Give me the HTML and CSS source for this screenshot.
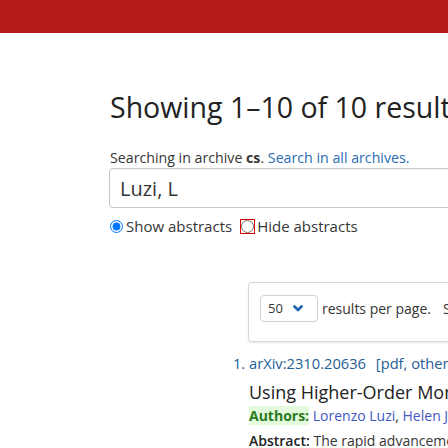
FILE: index.html
```html
<!DOCTYPE html>
<html>
<head>
<meta charset="utf-8">
<link rel="stylesheet" href="styles.css">
</head>
<body>
<header class="topbar"></header>
<main class="content">
  <h1 class="title">Showing 1–10 of 10 results for author: <span class="q">Luzi, L</span></h1>
  <p class="scope">Searching in archive <strong>cs</strong>. <a href="#">Search in all archives.</a></p>
  <div class="search">
    <input class="search-input" type="text" value="Luzi, L">
  </div>
  <div class="radios">
    <label class="radio"><input type="radio" name="abs" checked> Show abstracts</label>
    <label class="radio"><input type="radio" name="abs" class="focused"> Hide abstracts</label>
  </div>
  <div class="pager-box">
    <div class="select">
      <span class="select-val">50</span>
      <svg class="chev" width="10" height="7" viewBox="0 0 10 7"><path d="M1.5 1.5 L5 5 L8.5 1.5" fill="none" stroke="#1f67b0" stroke-width="2.8" stroke-linecap="round" stroke-linejoin="round"/></svg>
    </div>
    <span class="per-page">results per page.</span>
    <span class="per-page sort">Sort results by</span>
  </div>
  <ol class="results">
    <li class="result">
      <p class="result-id"><a href="#">arXiv:2310.20636</a> <span class="formats">[<a href="#">pdf</a>, <a href="#">other</a>]</span></p>
      <p class="result-title">Using Higher-Order Moments to Assess the Quality of GAN-generated Image Features</p>
      <p class="authors"><span class="label">Authors:</span> <a href="#">Lorenzo Luzi</a>, <a href="#">Helen Jenne</a>, <a href="#">Carlos Ortiz Marrero</a></p>
      <p class="abstract"><span class="abs-label">Abstract:</span> The rapid advancement of Generative Adversarial Networks</p>
    </li>
  </ol>
</main>
</body>
</html>
```
FILE: styles.css
```css
html, body {
  margin: 0;
  padding: 0;
  background: #fff;
  overflow: hidden;
}
body {
  width: 448px;
  height: 448px;
  font-family: "Open Sans", "Noto Sans", sans-serif;
  color: #363636;
}
.topbar {
  height: 33px;
  background: #b31b1b;
}
.content {
  padding-left: 110px;
  width: 900px;
}
.title {
  margin: 57px 0 0 0;
  font-size: 28.5px;
  line-height: 35px;
  font-weight: 400;
  color: #222;
  white-space: nowrap;
}
.scope {
  margin: 23px 0 0 0;
  font-size: 14.2px;
  line-height: 20px;
  white-space: nowrap;
  color: #363636;
}
.scope strong { font-weight: 700; color: #363636; }
.scope a { color: #2c6bb3; text-decoration: none; }
.search-input {
  box-sizing: border-box;
  width: 700px;
  height: 40px;
  margin: 0 0 0 -1px;
  padding: 0 10px;
  border: 1px solid #c8c8c8;
  border-radius: 4px;
  font-family: "Open Sans", sans-serif;
  font-size: 20px;
  color: #363636;
  box-shadow: inset 0 1px 2px rgba(10,10,10,0.05);
  outline: none;
}
.radios {
  display: flex;
  gap: 9px;
  margin-top: 10px;
  height: 16px;
  align-items: center;
}
.radio {
  display: flex;
  align-items: center;
  font-size: 15px;
  color: #363636;
  white-space: nowrap;
}
.radio input {
  margin: 0 3px 0 0;
  width: 13px;
  height: 13px;
  accent-color: #0075ff;
}
.radio input.focused {
  outline: 1px solid #e00000;
  outline-offset: 0;
}
.pager-box {
  display: flex;
  align-items: center;
  gap: 4px;
  box-sizing: border-box;
  width: 700px;
  height: 60px;
  margin: 48px 0 0 138px;
  padding: 0 0 8px 11px;
  border: 1px solid #d8d8d8;
  border-radius: 4px;
  box-shadow: 0 1px 2px rgba(10,10,10,0.1);
}
.select {
  display: flex;
  align-items: center;
  box-sizing: border-box;
  width: 58px;
  height: 27px;
  padding: 0 0 0 7px;
  border: 1px solid #d0d0d0;
  border-radius: 4px;
  font-size: 13px;
  color: #363636;
}
.select-val { width: 25px; }
.chev { margin-top: 1px; }
.per-page {
  font-size: 14px;
  color: #363636;
  white-space: nowrap;
}
.sort { margin-left: 8px; }
.results {
  margin: 10px 0 0 139px;
  padding: 0;
  font-size: 14.7px;
  color: #1f5e96;
}
.result::marker {
  color: #1f5e96;
}
.result-id {
  margin: 0;
  line-height: 22px;
  white-space: nowrap;
}
.result-id a { color: #1f5e96; text-decoration: none; }
.formats { margin-left: 6px; color: #1f5e96; }
.result-title {
  margin: 5px 0 0 0;
  font-size: 18px;
  line-height: 26px;
  color: #222;
  white-space: nowrap;
}
.authors {
  margin: 1px 0 0 0;
  font-size: 14px;
  line-height: 20px;
  white-space: nowrap;
  color: #363636;
}
.authors .label {
  background: #e3fadc;
  color: #2a7a1e;
  font-weight: 700;
}
.authors a { color: #4157c4; text-decoration: none; }
.abstract {
  margin: 4px 0 0 0;
  font-size: 14px;
  line-height: 22px;
  white-space: nowrap;
  color: #363636;
}
.abs-label { font-weight: 600; color: #222; }
```
